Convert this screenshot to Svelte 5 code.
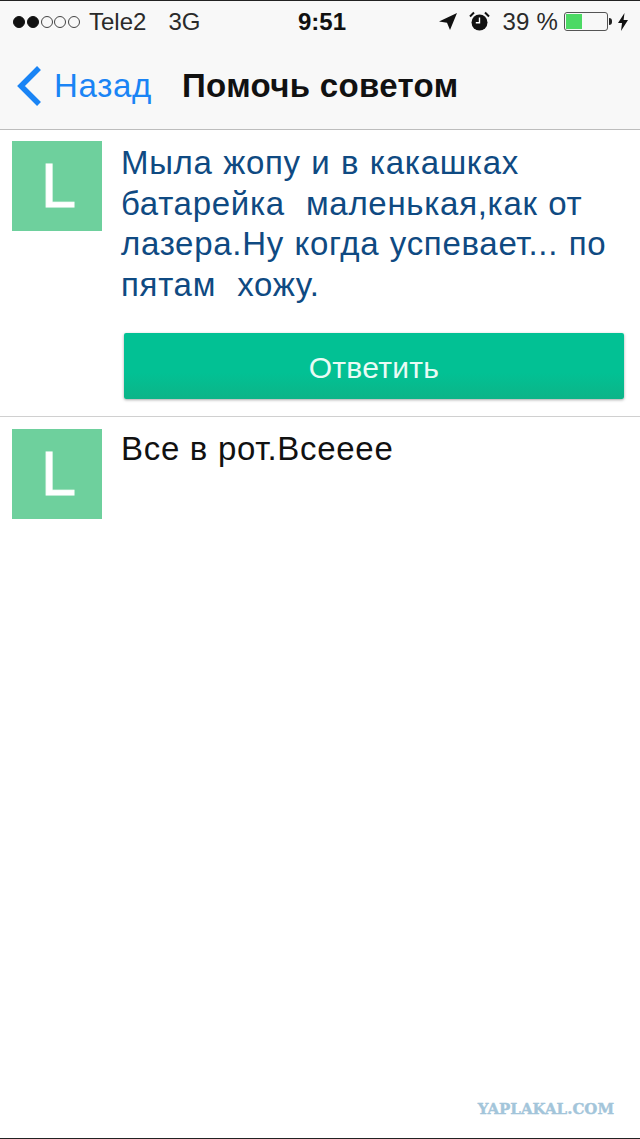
<script>
  const dots = [true, true, false, false, false];
</script>

<div class="page">
  <header class="nav">
    <div class="status">
      <div class="left">
        <span class="dots">
          {#each dots as on}
            <i class="dot" class:on></i>
          {/each}
        </span>
        <span class="carrier">Tele2</span>
        <span class="net">3G</span>
      </div>
      <span class="time">9:51</span>
      <div class="right">
        <svg class="loc" width="18" height="18" viewBox="0 0 18 18"><path d="M18 0 0 8.500l8 1.300L11 17z" fill="#111"/></svg>
        <svg class="alarm" width="21" height="21" viewBox="0 0 21 21">
          <circle cx="10.5" cy="11.5" r="8" fill="#111"/>
          <path d="M10.5 6.5v5.2H6.8" fill="none" stroke="#fff" stroke-width="1.4"/>
          <path d="M1 5.500 5 1.500M20 5.500 16 1.500" stroke="#111" stroke-width="2"/>
        </svg>
        <span class="pct">39 %</span>
        <span class="battery"><span class="level"></span></span>
        <span class="nub"></span>
        <svg class="bolt" width="10" height="18" viewBox="0 0 10 18"><path d="M6.500 0 0 10h4l-1 8 7-11H5.600z" fill="#111"/></svg>
      </div>
    </div>
    <div class="bar">
      <a class="back" href="#back">
        <svg width="28" height="42" viewBox="0 0 28 42"><path d="M24 3 6 21l18 18" fill="none" stroke="#1a84f5" stroke-width="5.500"/></svg>
        <span>Назад</span>
      </a>
      <h1>Помочь советом</h1>
    </div>
  </header>

  <section class="post first">
    <div class="avatar"><span>L</span></div>
    <div class="body">
      <p class="question">Мыла жопу и в какашках<br />батарейка&nbsp; маленькая,как от<br />лазера.Ну когда успевает... по<br />пятам&nbsp; хожу.</p>
      <button class="reply">Ответить</button>
    </div>
  </section>

  <section class="post">
    <div class="avatar"><span>L</span></div>
    <p class="answer">Все в рот.Всееее</p>
  </section>

  <div class="spacer"></div>
  <div class="mark">YAPLAKAL.COM</div>
</div>

<style>
  :global(body) {
    margin: 0;
    background: #fff;
  }
  .page {
    width: 640px;
    height: 1139px;
    box-sizing: border-box;
    display: flex;
    flex-direction: column;
    border-top: 1px solid #222;
    border-bottom: 1px solid #222;
    font-family: "Liberation Sans", Arial, sans-serif;
    background: #fff;
  }
  .nav {
    height: 129px;
    box-sizing: border-box;
    background: #f8f8f8;
    border-bottom: 1px solid #bdbdbd;
    flex: none;
  }
  .status {
    height: 43px;
    display: grid;
    grid-template-columns: 1fr auto 1fr;
    align-items: center;
    padding: 0 12px 2px 13px;
    box-sizing: border-box;
    color: #2a2a2a;
    font-size: 24px;
  }
  .left, .right {
    display: flex;
    align-items: center;
  }
  .right { justify-content: flex-end; }
  .dots {
    display: flex;
    gap: 1.75px;
    margin-right: 9px;
  }
  .dot {
    width: 12px;
    height: 12px;
    box-sizing: border-box;
    border: 1px solid #444;
    border-radius: 50%;
  }
  .dot.on { background: #111; border-color: #111; }
  .net { margin-left: 22px; }
  .time {
    color: #111;
    font-weight: 700;
    font-size: 24px;
    margin-left: 3px;
  }
  .loc { margin-right: 12px; }
  .alarm { margin-right: 12px; }
  .pct { margin-right: 6px; letter-spacing: 0.2px; }
  .battery {
    width: 44px;
    height: 19px;
    box-sizing: border-box;
    border: 1px solid #555;
    border-radius: 3px;
    padding: 1px;
    display: block;
  }
  .level {
    display: block;
    width: 16px;
    height: 100%;
    background: #4cd964;
  }
  .nub {
    width: 3px;
    height: 7px;
    margin-left: 1px;
    background: #222;
    border-radius: 0 3px 3px 0;
  }
  .bolt { margin-left: 6px; }
  .bar {
    display: flex;
    align-items: center;
    height: 85px;
    padding-bottom: 1px;
    box-sizing: border-box;
  }
  .back {
    display: flex;
    align-items: center;
    color: #1a84f5;
    text-decoration: none;
    font-size: 33px;
    letter-spacing: 0.7px;
    padding-left: 15px;
    width: 182px;
    box-sizing: border-box;
    gap: 11px;
    flex: none;
  }
  .back svg { flex: none; }
  h1 {
    margin: 0;
    font-size: 33px;
    letter-spacing: 0.35px;
    font-weight: 700;
    color: #111;
  }
  .post {
    display: flex;
    align-items: flex-start;
    padding: 11px 16px 0 12px;
    gap: 19px;
  }
  .post.first {
    padding-bottom: 17px;
    border-bottom: 1px solid #d0d0d0;
  }
  .post:not(.first) { padding-top: 12px; }
  .avatar {
    width: 90px;
    height: 90px;
    flex: none;
    background: #6ed09d;
    color: #fff;
    font-size: 63px;
    padding: 0 0 2px 3px;
    box-sizing: border-box;
    display: flex;
    align-items: center;
    justify-content: center;
    -webkit-text-stroke: 1px #fff;
  }
  .body { flex: 1; }
  .question, .answer {
    font-size: 33px;
    letter-spacing: 0.7px;
    line-height: 40.6px;
  }
  .question { margin: 2px 0 0; color: #0f4a82; word-spacing: 0.7px; }
  .answer { margin: 0; color: #111; }
  .reply {
    display: block;
    width: 500px;
    height: 66px;
    margin: 28px 0 0 3px;
    padding: 4px 0 0;
    border: 0;
    border-radius: 2px;
    background: linear-gradient(#02c194 0%, #02c194 60%, #0cb488 100%);
    box-shadow: 0 1px 3px rgba(0, 0, 0, 0.35);
    color: #e9fbf5;
    font: 400 30px "Liberation Sans", Arial, sans-serif;
    letter-spacing: 0.3px;
  }
  .spacer { flex: 1; }
  .mark {
    align-self: flex-end;
    margin: 0 26px 20px 0;
    color: #a3c5da;
    font: 700 15px "DejaVu Serif", serif;
    -webkit-text-stroke: 0.4px #a3c5da;
  }
</style>
